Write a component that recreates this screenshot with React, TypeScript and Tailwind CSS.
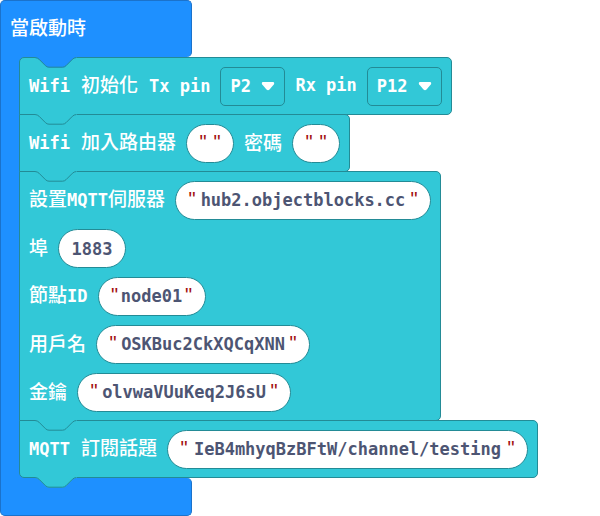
import type { ReactNode } from "react";

const MONO = "font-['DejaVu_Sans_Mono','Liberation_Mono',monospace] text-[17px] font-bold";
const CJK = "font-['Noto_Sans_CJK_TC',sans-serif] text-[19px] leading-6 font-medium text-white";

function Latin({ children }: { children: ReactNode }) {
  return <span className={`${MONO} whitespace-pre`}>{children}</span>;
}

function Notch({ fill, className }: { fill: string; className: string }) {
  return (
    <svg aria-hidden="true" width="42" height="12" viewBox="0 0 42 12" className={`absolute ${className}`}>
      <path d="M0 0H42V1H41Q39 1 37.5 2.5L31 9Q29.5 10.5 27.5 10.5H14Q12 10.5 10.5 9L4 2.5Q2.500 1 0 1Z" fill={fill} />
      <path
        d="M0 .5Q2.500 .7 4 2.200L10.500 8.700Q12 10.200 14 10.200H27.500Q29.500 10.200 31 8.700L37.500 2.200Q39 .7 41.500 .5"
        fill="none"
        stroke="#238b96"
      />
    </svg>
  );
}

function Block({ children, className = "", notch = "#32c8d7" }: { children: ReactNode; className?: string; notch?: string }) {
  return (
    <div className={`relative w-fit rounded-r-[5px] border border-[#238b96] bg-[#32c8d7] py-2 pr-[9px] pl-[9px] ${className}`}>
      <Notch fill={notch} className="-top-px left-[15px]" />
      {children}
    </div>
  );
}

function Row({ children }: { children: ReactNode }) {
  return <div className="flex h-10 items-center gap-[10px]">{children}</div>;
}

function Label({ htmlFor, children }: { htmlFor?: string; children: ReactNode }) {
  return (
    <label htmlFor={htmlFor} className={`${CJK} flex items-baseline gap-[11px] pb-0.5 whitespace-nowrap`}>
      {children}
    </label>
  );
}

function Quote() {
  return <span className="w-[10px] shrink-0 pb-0.5 text-center font-['Liberation_Sans',sans-serif] text-[20px] leading-6 text-[#a30f0f]">"</span>;
}

function TextField({ id, value, label, className }: { id: string; value: string; label?: string; className: string }) {
  return (
    <span className={`flex h-[39px] items-center rounded-full border border-[#238b96] bg-white px-[11px] ${className}`}>
      <Quote />
      <input
        id={id}
        aria-label={label}
        defaultValue={value}
        spellCheck={false}
        className={`${MONO} w-0 min-w-0 flex-1 bg-transparent pt-0.5 text-center text-[#4d5573] outline-none`}
      />
      <Quote />
    </span>
  );
}

function PinSelect({ id, value, className }: { id: string; value: string; className: string }) {
  return (
    <span className={`relative ${className}`}>
      <select
        id={id}
        defaultValue={value}
        className={`${MONO} h-[39px] w-full appearance-none rounded-[5px] border border-[#238b96] bg-transparent pt-0.5 pl-[9px] text-white outline-none`}
      >
        <option>{value}</option>
      </select>
      <svg aria-hidden="true" width="14" height="9" viewBox="0 0 14 9" className="pointer-events-none absolute top-[15px] right-[10px]">
        <path d="M2 0H12Q14 .5 12.800 2.500L8.500 7.500Q7 9 5.500 7.500L1.200 2.500Q0 .5 2 0Z" fill="white" />
      </svg>
    </span>
  );
}

export default function App() {
  return (
    <main className="w-full bg-white">
      <header className="h-[57px] w-48 rounded-t-[5px] rounded-br-[5px] border border-b-0 border-[#1b72cb] bg-[#1e90ff] px-[9px] pt-3.5">
        <h1 className={CJK}>當啟動時</h1>
      </header>
      <div className="flex">
        <div className="-mt-2 w-6 shrink-0 border-l border-[#1b72cb] bg-[#1e90ff]" />
        <div className="relative -ml-[5px]">
          <Block className="rounded-tl-[5px]" notch="#1e90ff">
            <Row>
              <Label htmlFor="tx">
                <Latin>Wifi</Latin>
                <span>初始化</span>
                <Latin>Tx pin</Latin>
              </Label>
              <PinSelect id="tx" value="P2" className="w-[65px]" />
              <Label htmlFor="rx">
                <Latin>Rx pin</Latin>
              </Label>
              <PinSelect id="rx" value="P12" className="w-[75px]" />
            </Row>
          </Block>
          <Block className="-mt-px">
            <Row>
              <Label htmlFor="ssid">
                <Latin>Wifi</Latin>
                <span>加入路由器</span>
              </Label>
              <TextField id="ssid" value="" className="w-12" />
              <Label htmlFor="pass">密碼</Label>
              <TextField id="pass" value="" className="w-12" />
            </Row>
          </Block>
          <Block className="-mt-px flex flex-col gap-2">
            <Row>
              <Label htmlFor="host">
                <span>
                  設置<Latin>MQTT</Latin>伺服器
                </span>
              </Label>
              <TextField id="host" value="hub2.objectblocks.cc" className="w-[256px]" />
            </Row>
            <Row>
              <Label htmlFor="port">埠</Label>
              <input
                id="port"
                defaultValue="1883"
                className={`${MONO} h-[39px] w-[68px] rounded-full border border-[#238b96] bg-white pt-0.5 text-center text-[#4d5573] outline-none`}
              />
            </Row>
            <Row>
              <Label htmlFor="node">
                <span>
                  節點<Latin>ID</Latin>
                </span>
              </Label>
              <TextField id="node" value="node01" className="w-[108px]" />
            </Row>
            <Row>
              <Label htmlFor="user">用戶名</Label>
              <TextField id="user" value="OSKBuc2CkXQCqXNN" className="w-[214px]" />
            </Row>
            <Row>
              <Label htmlFor="key">金鑰</Label>
              <TextField id="key" value="olvwaVUuKeq2J6sU" className="w-[214px]" />
            </Row>
          </Block>
          <Block className="-mt-px rounded-bl-[5px]">
            <Row>
              <Label htmlFor="topic">
                <Latin>MQTT</Latin>
                <span>訂閱話題</span>
              </Label>
              <TextField id="topic" value="IeB4mhyqBzBFtW/channel/testing" className="w-[361px]" />
            </Row>
            <Notch fill="#32c8d7" className="top-full left-[15px] z-10" />
          </Block>
        </div>
      </div>
      <footer className="h-[38px] w-48 rounded-b-[5px] rounded-tr-[5px] border border-t-0 border-[#1b72cb] bg-[#1e90ff]" />
    </main>
  );
}
